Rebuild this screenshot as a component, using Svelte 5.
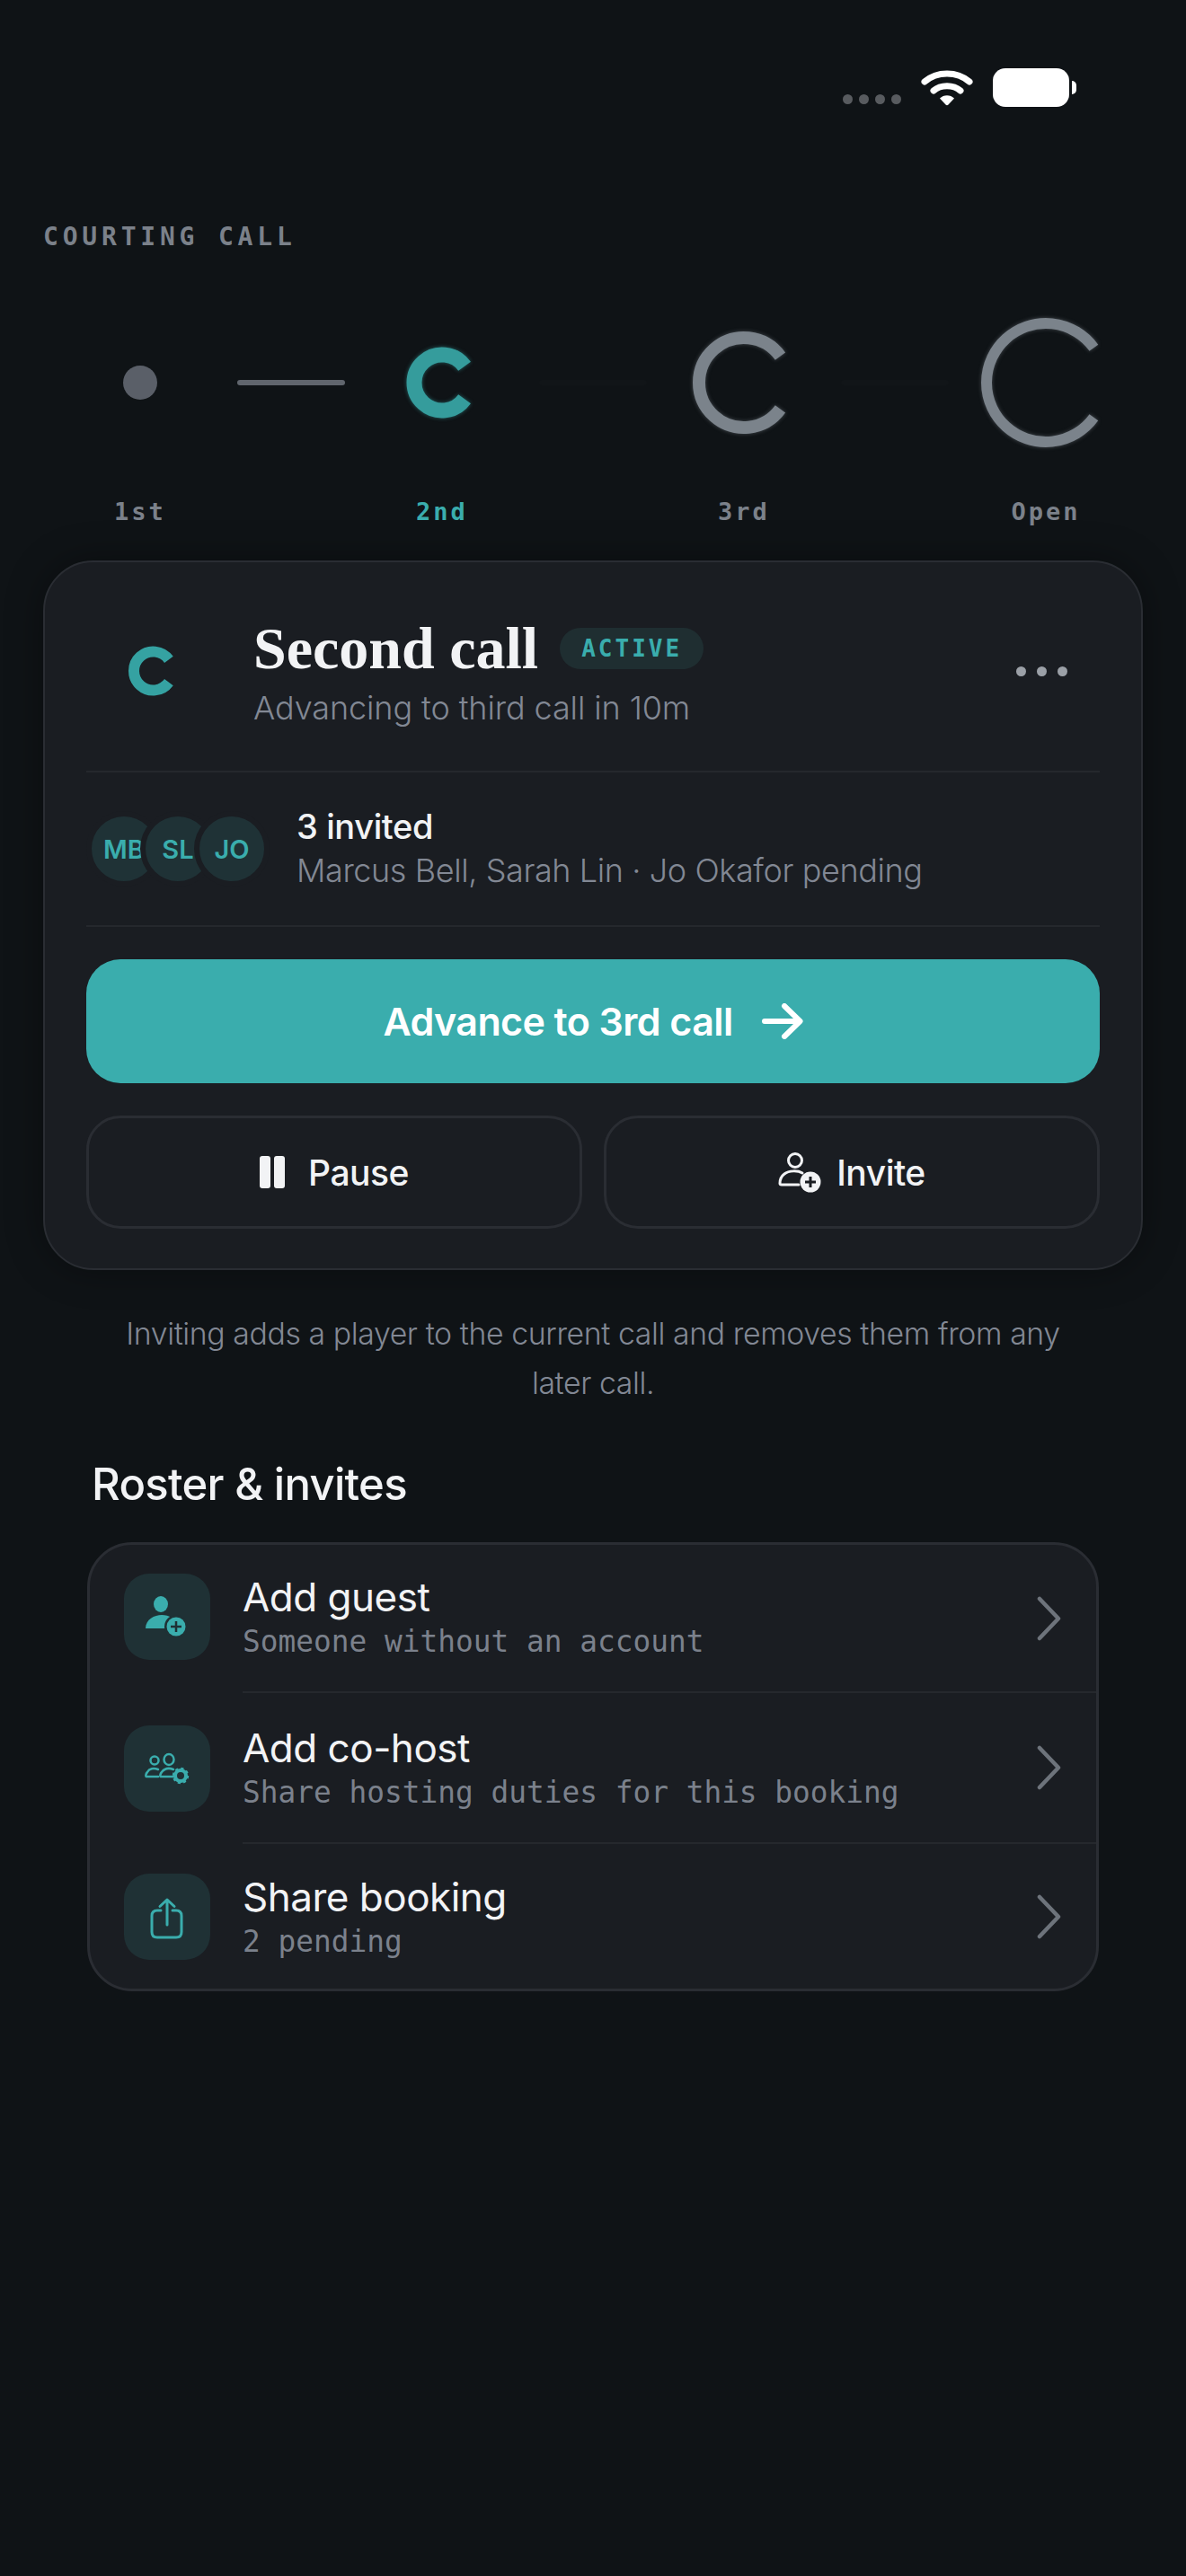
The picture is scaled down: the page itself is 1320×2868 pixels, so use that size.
<script>
  // steps of the courting call, r/width are in px and drawn around the row centre
  const steps = [
    { label: '1st', kind: 'dot' },
    { label: '2nd', kind: 'c', r: 31, w: 17, active: true },
    { label: '3rd', kind: 'c', r: 50, w: 14 },
    { label: 'Open', kind: 'c', r: 66, w: 12 }
  ];

  function arc(cx, cy, r, deg = 36) {
    const a = (deg * Math.PI) / 180;
    const x = cx + r * Math.cos(a);
    const dy = r * Math.sin(a);
    return `M${x.toFixed(2)} ${(cy - dy).toFixed(2)}A${r} ${r} 0 1 0 ${x.toFixed(2)} ${(cy + dy).toFixed(2)}`;
  }

  const avatars = ['MB', 'SL', 'JO'];

  const rows = [
    { icon: 'guest', title: 'Add guest', sub: 'Someone without an account' },
    { icon: 'cohost', title: 'Add co-host', sub: 'Share hosting duties for this booking' },
    { icon: 'share', title: 'Share booking', sub: '2 pending' }
  ];
</script>

<div class="page">
  <!-- status bar -->
  <div class="status">
    <div class="signal"><i></i><i></i><i></i><i></i></div>
    <svg class="wifi" width="58" height="42" viewBox="0 0 58 42">
      <path d="M4 15C18 3 40 3 54 15" fill="none" stroke="#fff" stroke-width="7" stroke-linecap="round" />
      <path d="M14 25C22 18 36 18 44 25" fill="none" stroke="#fff" stroke-width="7" stroke-linecap="round" />
      <path d="M21 33.5C25 29 33 29 37 33.5L30.5 40.5Q29 42 27.5 40.5Z" fill="#fff" />
    </svg>
    <div class="battery"><span></span></div>
  </div>

  <div class="eyebrow">COURTING CALL</div>

  <!-- stepper -->
  <div class="stepper">
    {#each steps as step, i}
      <div class="mark">
        {#if step.kind === 'dot'}
          <span class="dot"></span>
        {:else}
          <svg width="160" height="160" viewBox="0 0 160 160" class:teal={step.active}>
            <path d={arc(80, 80, step.r)} fill="none" stroke-width={step.w} />
          </svg>
        {/if}
      </div>
      {#if i < steps.length - 1}
        <div class="link" class:on={i === 0}></div>
      {/if}
    {/each}
    {#each steps as step, i}
      <div class="step-label" class:current={step.active}>{step.label}</div>
      {#if i < steps.length - 1}<div></div>{/if}
    {/each}
  </div>

  <!-- current call card -->
  <section class="card">
    <div class="head">
      <svg class="head-mark" width="148" height="70" viewBox="0 0 148 70">
        <path d={arc(74.5, 35, 21.5)} fill="none" stroke="#35a2a2" stroke-width="12" />
      </svg>
      <div class="head-text">
        <div class="title-line">
          <h1>Second call</h1>
          <span class="badge">ACTIVE</span>
        </div>
        <p>Advancing to third call in 10m</p>
      </div>
      <div class="more"><i></i><i></i><i></i></div>
    </div>

    <div class="invited">
      <div class="stack">
        {#each avatars as a}
          <span class="avatar"><b>{a}</b></span>
        {/each}
      </div>
      <div class="invited-text">
        <div class="count">3 invited</div>
        <div class="names">Marcus Bell, Sarah Lin · Jo Okafor pending</div>
      </div>
    </div>

    <button class="primary">
      <span>Advance to 3rd call</span>
      <svg width="46" height="40" viewBox="0 0 46 40">
        <path d="M3 20H42M25 3L42.500 20L25 37" fill="none" stroke="#fff" stroke-width="6" stroke-linecap="round" stroke-linejoin="round" />
      </svg>
    </button>

    <div class="secondary">
      <button>
        <svg width="28" height="36" viewBox="0 0 28 36">
          <rect x="0" y="0" width="12" height="36" rx="3" fill="#f2f3f5" />
          <rect x="16" y="0" width="12" height="36" rx="3" fill="#f2f3f5" />
        </svg>
        <span>Pause</span>
      </button>
      <button>
        <svg width="48" height="46" viewBox="0 0 48 46">
          <circle cx="19" cy="10" r="7.500" fill="none" stroke="#f2f3f5" stroke-width="3" />
          <path d="M27 24C22 21 12 21 7 25C3 28 2 32 2 35.500Q2 37 4 37H23" fill="none" stroke="#f2f3f5" stroke-width="3" stroke-linecap="round" />
          <circle cx="36" cy="34" r="11.500" fill="#f2f3f5" />
          <path d="M36 28V40M30 34H42" stroke="#1a1d22" stroke-width="3" />
        </svg>
        <span>Invite</span>
      </button>
    </div>
  </section>

  <p class="note">Inviting adds a player to the current call and removes them from any later call.</p>

  <h2>Roster &amp; invites</h2>

  <section class="list">
    {#each rows as row, i}
      <div class="row" class:last={i === rows.length - 1}>
        <div class="tile">
          {#if row.icon === 'guest'}
            <svg width="96" height="96" viewBox="0 0 96 96">
              <ellipse cx="41" cy="34" rx="8" ry="9" fill="#3aadad" />
              <path d="M24 61C24 51 34 46 42 46C46 46 50 47 53 49L50 61Z" fill="#3aadad" />
              <circle cx="58" cy="59" r="13" fill="#1f3135" />
              <circle cx="58" cy="59" r="10.500" fill="#3aadad" />
              <path d="M58 53V65M52 59H64" stroke="#1f3135" stroke-width="2.500" />
            </svg>
          {:else if row.icon === 'cohost'}
            <svg width="96" height="96" viewBox="0 0 96 96">
              <g fill="none" stroke="#3aadad" stroke-width="2.500" stroke-linecap="round">
                <circle cx="34" cy="39" r="4.500" />
                <ellipse cx="50" cy="38" rx="5.500" ry="6" />
                <path d="M38 49C33 47 28 48 26 52C24 54 24 57 25 57H38" />
                <path d="M55 49C50 47 45 48 42 52C40 54 40 57 41 57H55" />
              </g>
              <circle cx="63" cy="56" r="6" fill="none" stroke="#3aadad" stroke-width="4" />
              <circle cx="63" cy="56" r="7.800" fill="none" stroke="#3aadad" stroke-width="2.800" stroke-dasharray="3 3.130" />
            </svg>
          {:else}
            <svg width="96" height="96" viewBox="0 0 96 96">
              <path d="M41 41H37C33 41 31 43 31 47V65C31 69 33 71 37 71H58C62 71 64 69 64 65V47C64 43 62 41 58 41H54" fill="none" stroke="#3aadad" stroke-width="3" stroke-linecap="round" />
              <path d="M48 57V29M40 36.500L48 29L56 36.500" fill="none" stroke="#3aadad" stroke-width="3" stroke-linecap="round" stroke-linejoin="round" />
            </svg>
          {/if}
        </div>
        <div class="row-body">
          <div class="row-text">
            <div class="row-title">{row.title}</div>
            <div class="row-sub">{row.sub}</div>
          </div>
          <svg class="chevron" width="30" height="50" viewBox="0 0 30 50">
            <path d="M5 3L26 25L5 47" fill="none" stroke="#6d737b" stroke-width="4.500" stroke-linecap="round" stroke-linejoin="round" />
          </svg>
        </div>
      </div>
    {/each}
  </section>
</div>

<style>
  :global(body) {
    margin: 0;
    background: #0f1316;
  }

  .page {
    width: 1320px;
    height: 2868px;
    overflow: hidden;
    background: #0f1316;
    font-family: Inter, "Open Sans", sans-serif;
    color: #f2f3f5;
  }

  /* status bar */
  .status {
    display: flex;
    justify-content: flex-end;
    align-items: flex-start;
    padding: 76px 130px 0 0;
    height: 43px;
  }
  .signal {
    display: flex;
    gap: 7px;
    margin: 29px 22px 0 0;
  }
  .signal i {
    width: 11px;
    height: 11px;
    border-radius: 50%;
    background: #585b5f;
  }
  .wifi {
    margin-right: 22px;
  }
  .battery {
    position: relative;
    width: 85px;
    height: 43px;
    border-radius: 14px;
    background: #fff;
  }
  .battery span {
    position: absolute;
    left: 88px;
    top: 14px;
    width: 5px;
    height: 15px;
    border-radius: 0 8px 8px 0;
    background: #fff;
  }

  .eyebrow {
    margin: 125px 0 0 48px;
    font: 700 28px/40px "DejaVu Sans Mono", monospace;
    letter-spacing: 4.800px;
    color: #7b818a;
  }

  /* stepper */
  .stepper {
    display: grid;
    grid-template-columns: 216px 120px 216px 120px 216px 120px 216px;
    padding: 62px 0 0 48px;
    margin-bottom: 34px;
  }
  .mark {
    height: 160px;
    display: flex;
    align-items: center;
    justify-content: center;
  }
  .mark svg {
    stroke: #7b838b;
    filter: drop-shadow(0 0 2px rgba(123, 131, 139, 0.5));
  }
  .mark svg.teal {
    stroke: #359c9c;
    filter: drop-shadow(0 0 2px rgba(58, 173, 173, 0.5));
  }
  .dot {
    width: 38px;
    height: 38px;
    border-radius: 50%;
    background: #5a5f68;
  }
  .link {
    align-self: center;
    height: 6px;
    border-radius: 3px;
    background: #111518;
  }
  .link.on {
    background: #60656d;
  }
  .step-label {
    margin-top: 44px;
    text-align: center;
    font: 700 27px/40px "DejaVu Sans Mono", monospace;
    letter-spacing: 3px;
    color: #7b818a;
  }
  .step-label.current {
    color: #3aadad;
  }

  /* card */
  .card {
    box-sizing: border-box;
    width: 1224px;
    height: 790px;
    margin-left: 48px;
    padding: 0 46px;
    border: 2px solid #2a2d33;
    border-radius: 56px;
    background: #1a1d22;
    box-shadow: 0 0 40px rgba(0, 0, 0, 0.35);
  }
  .head {
    box-sizing: border-box;
    display: flex;
    align-items: center;
    height: 234px;
    padding-top: 12px;
    border-bottom: 2px solid #25282d;
  }
  .head-mark {
    flex: none;
    margin-top: -2px;
  }
  .head-text {
    margin: 2px 0 0 38px;
    flex: 1;
  }
  .title-line {
    display: flex;
    align-items: center;
    gap: 24px;
  }
  h1 {
    margin: 0;
    font: 700 66px/72px "Liberation Serif", serif;
    letter-spacing: 0;
    color: #f2f3f5;
  }
  .badge {
    height: 46px;
    padding: 0 24px;
    border-radius: 23px;
    background: #1f2e31;
    color: #3aadad;
    font: 700 26px/46px "DejaVu Sans Mono", monospace;
    letter-spacing: 3px;
  }
  .head-text p {
    margin: 5px 0 0;
    font-size: 36px;
    font-weight: 300;
    line-height: 50px;
    letter-spacing: -0.100px;
    color: #828894;
  }
  .more {
    display: flex;
    gap: 12px;
    margin: -2px 36px 0 0;
  }
  .more i {
    width: 11px;
    height: 11px;
    border-radius: 50%;
    background: #9ba0a7;
  }

  .invited {
    display: flex;
    align-items: center;
    gap: 30px;
    height: 170px;
    border-bottom: 2px solid #25282d;
  }
  .stack {
    display: flex;
  }
  .avatar {
    box-sizing: border-box;
    width: 84px;
    height: 84px;
    margin-left: -24px;
    border: 6px solid #1a1d22;
    border-radius: 50%;
    background: #1f3236;
    display: flex;
    align-items: center;
    justify-content: center;
    color: #3aadad;
    position: relative;
    overflow: hidden;
  }
  .avatar:first-child {
    margin-left: 0;
  }
  .avatar b {
    font: 600 29px/1 Inter, sans-serif;
  }
  .count {
    font-size: 38px;
    font-weight: 500;
    line-height: 48px;
    letter-spacing: -0.400px;
  }
  .names {
    font-size: 36px;
    font-weight: 300;
    line-height: 50px;
    letter-spacing: -0.400px;
    color: #828894;
  }

  button {
    font-family: inherit;
    color: inherit;
  }
  .primary {
    display: flex;
    align-items: center;
    justify-content: center;
    gap: 32px;
    width: 100%;
    height: 138px;
    margin-top: 36px;
    border: 0;
    border-radius: 38px;
    background: #3aadad;
    color: #fff;
    font-size: 43px;
    font-weight: 600;
    letter-spacing: -0.600px;
  }
  .secondary {
    display: flex;
    gap: 24px;
    margin-top: 36px;
  }
  .secondary button {
    flex: 1;
    height: 126px;
    display: flex;
    align-items: center;
    justify-content: center;
    gap: 26px;
    border: 3px solid #2a2d33;
    border-radius: 38px;
    background: transparent;
    font-size: 39px;
    font-weight: 500;
    letter-spacing: -0.500px;
  }
  .secondary button + button {
    gap: 17px;
  }

  .note {
    width: 1060px;
    margin: 43px auto 0;
    text-align: center;
    font-size: 33.800px;
    font-weight: 300;
    line-height: 55px;
    letter-spacing: -0.400px;
    color: #828894;
  }

  h2 {
    margin: 56px 0 0 102px;
    font-size: 49px;
    font-weight: 500;
    line-height: 60px;
    letter-spacing: -0.700px;
    color: #f2f3f5;
  }

  .list {
    box-sizing: border-box;
    width: 1126px;
    height: 500px;
    margin: 34px 0 0 97px;
    padding-left: 38px;
    border: 3px solid #2a2d33;
    border-radius: 50px;
    background: #1a1d22;
  }
  .row {
    display: flex;
    align-items: center;
    gap: 36px;
    height: 168px;
  }
  .row:first-child {
    height: 165px;
  }
  .row:first-child .tile {
    margin-top: -5px;
  }
  .row:first-child .row-text {
    margin-top: -2px;
  }
  .row.last {
    height: 162px;
  }
  .tile {
    flex: none;
    width: 96px;
    height: 96px;
    border-radius: 28px;
    background: #1f3135;
  }
  .tile svg {
    display: block;
  }
  .row-body {
    box-sizing: border-box;
    flex: 1;
    height: 100%;
    display: flex;
    align-items: center;
    justify-content: space-between;
    padding-right: 38px;
    border-bottom: 2px solid #25282d;
  }
  .row.last .row-body {
    border-bottom: 0;
  }
  .row-text {
    display: flex;
    flex-direction: column;
    gap: 3px;
  }
  .row-title {
    font-size: 44px;
    font-weight: 400;
    line-height: 52px;
    letter-spacing: -0.500px;
    color: #f2f3f5;
  }
  .row-sub {
    font: 400 32.800px/42px "DejaVu Sans Mono", monospace;
    color: #7b818c;
  }
</style>
